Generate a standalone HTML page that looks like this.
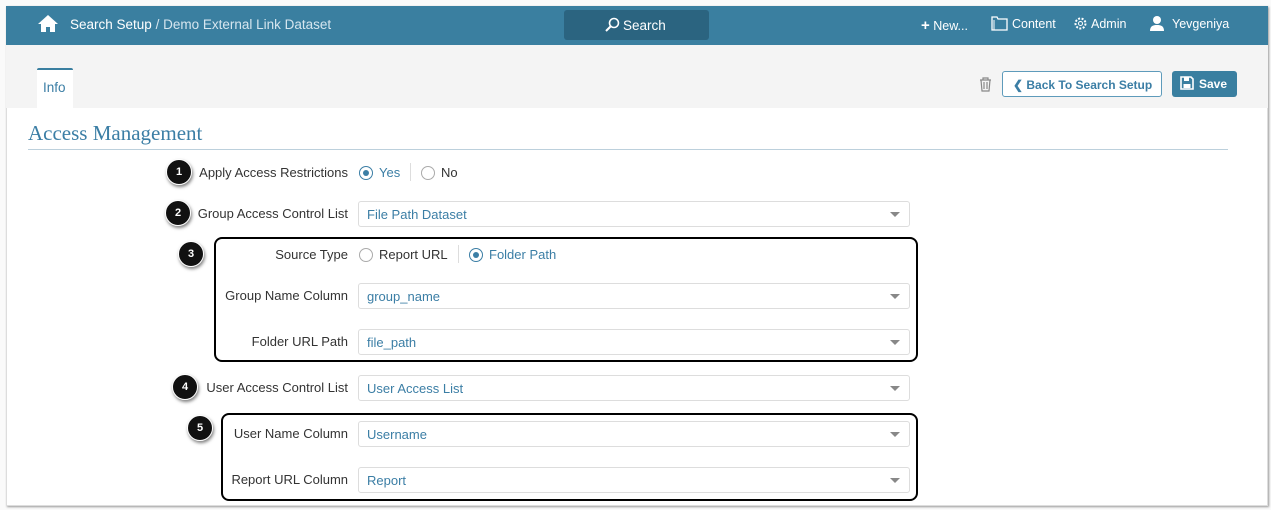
<!DOCTYPE html>
<html><head><meta charset="utf-8"><style>
*{box-sizing:border-box;margin:0;padding:0}
body{width:1271px;height:510px;background:#fafafa;font-family:"Liberation Sans",Arial,sans-serif;position:relative;overflow:hidden}
.a{position:absolute}
#frame{left:6px;top:6px;width:1262px;height:500px;background:#fff;box-shadow:1px 1px 2px #999;border:1px solid #ddd}
#hdr{left:6px;top:6px;width:1262px;height:39px;background:#3a7fa0}
.ht{color:#fff;font-size:13.5px;top:17px}
#band{left:6px;top:45px;width:1262px;height:63px;background:#f4f4f4}
.lbl{font-size:13px;color:#333;text-align:right;width:220px;left:128px}
.sel{left:358px;width:552px;height:26px;border:1px solid #ddd;border-radius:3px;background:#fff;color:#3b7ea5;font-size:13px;padding:5px 8px}
.sel:after{content:"";position:absolute;right:9px;top:10px;border-left:5px solid transparent;border-right:5px solid transparent;border-top:5px solid #888}
.box{border:2px solid #000;border-radius:8px}
.badge{width:26px;height:26px;border-radius:50%;background:#111;color:#fff;font-size:11px;font-weight:bold;text-align:center;line-height:24px;box-shadow:1px 2px 3px rgba(0,0,0,.5);border:1px solid #fff}
.rad{width:14px;height:14px;border-radius:50%;border:1px solid #aaa;background:#fff}
.rad.on{border-color:#3b7ea5}
.rad.on:after{content:"";position:absolute;left:3px;top:3px;width:6px;height:6px;border-radius:50%;background:#3b7ea5}
.rt{font-size:13px}
</style></head><body>
<div class="a" id="frame"></div>
<div class="a" id="hdr"></div>
<svg class="a" style="left:37px;top:14px" width="22" height="19" viewBox="0 0 22 19"><path d="M11 1L1 10h3v8h5v-5h4v5h5v-8h3z" fill="#fff"/></svg>
<div class="a ht" style="left:70px">Search Setup <span style="color:#d6e6ef">/ Demo External Link Dataset</span></div>
<div class="a" style="left:564px;top:10px;width:145px;height:30px;background:#2b6480;border-radius:3px"></div>
<svg class="a" style="left:604px;top:17px" width="16" height="16" viewBox="0 0 16 16"><circle cx="10" cy="6" r="4.5" fill="none" stroke="#fff" stroke-width="1.6"/><path d="M7 9L2 14" stroke="#fff" stroke-width="2"/></svg>
<div class="a ht" style="left:623px;top:18px">Search</div>
<div class="a ht" style="left:921px;font-size:12.5px"><b style="font-size:15px">+</b> New...</div>
<svg class="a" style="left:991px;top:16px" width="17" height="15" viewBox="0 0 17 15"><path d="M1 1h5l1 2h9v11H1z" fill="none" stroke="#fff" stroke-width="1.3"/><path d="M3 4v10" stroke="#fff"/></svg>
<div class="a ht" style="left:1012px;font-size:12.5px">Content</div>
<svg class="a" style="left:1073px;top:16px" width="15" height="15" viewBox="0 0 15 15"><circle cx="7.5" cy="7.5" r="5" fill="none" stroke="#fff" stroke-width="2" stroke-dasharray="2 1.5"/><circle cx="7.5" cy="7.5" r="2" fill="none" stroke="#fff"/></svg>
<div class="a ht" style="left:1091px;font-size:12.5px">Admin</div>
<svg class="a" style="left:1149px;top:15px" width="16" height="16" viewBox="0 0 16 16"><circle cx="8" cy="5" r="4" fill="#fff"/><path d="M1 16c0-5 3-6 7-6s7 1 7 6z" fill="#fff"/></svg>
<div class="a ht" style="left:1172px;font-size:12.5px">Yevgeniya</div>
<div class="a" id="band"></div>
<div class="a" style="left:37px;top:68px;width:36px;height:40px;background:#fff;border-top:2px solid #3a7fa0;border-radius:2px 2px 0 0"></div>
<div class="a" style="left:43px;top:80px;color:#3b7ea5;font-size:13.5px">Info</div>
<svg class="a" style="left:979px;top:77px" width="13" height="15" viewBox="0 0 13 15"><path d="M1 3h11M4 3V1h5v2M2 3l1 11h7l1-11M5 5v7M8 5v7" fill="none" stroke="#888" stroke-width="1.2"/></svg>
<div class="a" style="left:1002px;top:71px;width:160px;height:26px;border:1px solid #5e9bbb;border-radius:3px;background:#fff;color:#3b7ea5;font-size:12px;font-weight:bold;padding:6px 0 0 10px">❮ Back To Search Setup</div>
<div class="a" style="left:1172px;top:71px;width:65px;height:26px;background:#3a7fa0;border-radius:3px;color:#fff;font-size:12px;font-weight:bold;padding:6px 0 0 27px">Save</div>
<svg class="a" style="left:1180px;top:76px" width="14" height="14" viewBox="0 0 14 14"><path d="M1 1h10l2 2v10H1z" fill="none" stroke="#fff" stroke-width="1.6"/><rect x="4" y="1.5" width="5" height="3.5" fill="#fff"/><rect x="3.5" y="8" width="7" height="4" fill="#fff"/></svg>
<div class="a" style="left:28px;top:121px;font-family:'Liberation Serif',serif;font-size:21px;color:#3b7ea5">Access Management</div>
<div class="a" style="left:28px;top:149px;width:1200px;height:1px;background:#bcd0dc"></div>

<div class="a box" style="left:214px;top:237px;width:704px;height:125px"></div>
<div class="a box" style="left:221px;top:413px;width:697px;height:88px"></div>

<div class="a lbl" style="top:165px">Apply Access Restrictions</div>
<div class="a rad on" style="left:359px;top:166px"></div><div class="a rt" style="left:379px;top:165px;color:#3b7ea5">Yes</div>
<div class="a" style="left:410px;top:163px;width:1px;height:18px;background:#ddd"></div>
<div class="a rad" style="left:421px;top:166px"></div><div class="a rt" style="left:441px;top:165px;color:#333">No</div>

<div class="a lbl" style="top:206px">Group Access Control List</div>
<div class="a sel" style="top:201px">File Path Dataset</div>

<div class="a lbl" style="top:247px">Source Type</div>
<div class="a rad" style="left:359px;top:248px"></div><div class="a rt" style="left:379px;top:247px;color:#333">Report URL</div>
<div class="a" style="left:458px;top:245px;width:1px;height:18px;background:#ddd"></div>
<div class="a rad on" style="left:469px;top:248px"></div><div class="a rt" style="left:489px;top:247px;color:#3b7ea5">Folder Path</div>

<div class="a lbl" style="top:288px">Group Name Column</div>
<div class="a sel" style="top:283px">group_name</div>
<div class="a lbl" style="top:334px">Folder URL Path</div>
<div class="a sel" style="top:329px">file_path</div>
<div class="a lbl" style="top:380px">User Access Control List</div>
<div class="a sel" style="top:375px">User Access List</div>
<div class="a lbl" style="top:426px">User Name Column</div>
<div class="a sel" style="top:421px">Username</div>
<div class="a lbl" style="top:472px">Report URL Column</div>
<div class="a sel" style="top:467px">Report</div>

<div class="a badge" style="left:166px;top:159px">1</div>
<div class="a badge" style="left:165px;top:200px">2</div>
<div class="a badge" style="left:178px;top:241px">3</div>
<div class="a badge" style="left:172px;top:374px">4</div>
<div class="a badge" style="left:187px;top:415px">5</div>
</body></html>
